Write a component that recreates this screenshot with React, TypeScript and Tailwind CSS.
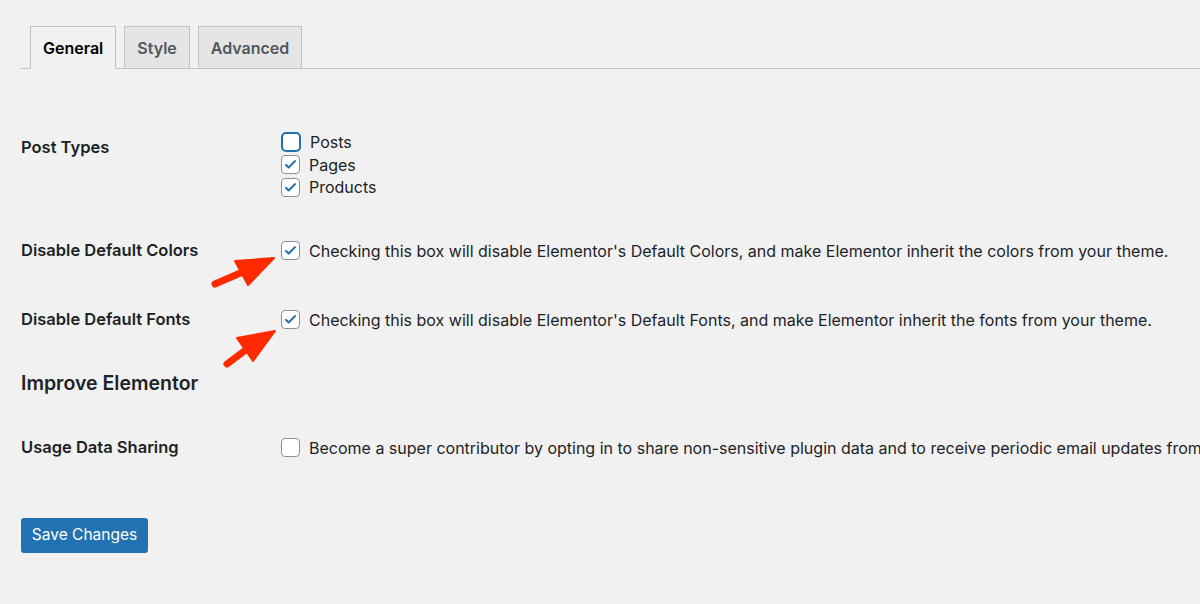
import React from 'react';

type BoxProps = { checked?: boolean; focused?: boolean };

function Box({ checked, focused }: BoxProps) {
  return (
    <span
      className={
        focused
          ? 'flex h-[20px] w-[20px] shrink-0 items-center justify-center rounded-[5px] border-2 border-[#2271b1] bg-white'
          : 'flex h-[19px] w-[19px] shrink-0 items-center justify-center rounded-[4px] border border-[#8c8f94] bg-white'
      }
    >
      {checked && (
        <svg viewBox="0 0 20 20" className="h-[15px] w-[15px]">
          <path d="M4 10.5l3.5 3.5L16 5.5" fill="none" stroke="#2271b1" strokeWidth="2.8" strokeLinecap="round" strokeLinejoin="round" />
        </svg>
      )}
    </span>
  );
}

const tabs = ['General', 'Style', 'Advanced'];

export default function App() {
  return (
    <div
      className="relative h-[604px] w-[1200px] overflow-hidden bg-[#f1f1f1] text-[#1d2327]"
      style={{ fontFamily: 'Inter, "Noto Sans", sans-serif' }}
    >
      <div className="pl-[21px]">
        {/* tabs */}
        <div className="mt-[27px] flex h-[42px] items-end border-b border-[#c3c4c7] pl-[9px]">
          {tabs.map((t, i) => (
            <div
              key={t}
              className={
                i === 0
                  ? '-mb-px mr-[8px] flex h-[43px] items-center border border-b-0 border-[#c3c4c7] bg-[#f1f1f1] px-[12px] text-[16px] font-semibold text-black'
                  : 'mr-[8px] flex h-[42px] items-center border border-b-0 border-[#c3c4c7] bg-[#e5e5e5] px-[12px] text-[16px] font-semibold text-[#50575e]'
              }
            >
              {t}
            </div>
          ))}
        </div>

        {/* Post Types */}
        <div className="mt-[62px] flex">
          <div className="w-[260px] shrink-0 pt-[4px] text-[16.5px] font-semibold leading-[24px]">Post Types</div>
          <div className="flex flex-col text-[16px]">
            {[
              { label: 'Posts', checked: false, focused: true },
              { label: 'Pages', checked: true },
              { label: 'Products', checked: true },
            ].map((o) => (
              <label key={o.label} className="flex h-[22.5px] items-center gap-[9px]">
                <Box checked={o.checked} focused={o.focused} />
                <span>{o.label}</span>
              </label>
            ))}
          </div>
        </div>

        {/* Disable Default Colors */}
        <div className="mt-[40px] flex h-[24px] items-center text-[16px]">
          <div className="w-[260px] shrink-0 text-[16.5px] font-semibold">Disable Default Colors</div>
          <label className="flex items-center gap-[9px] whitespace-nowrap">
            <Box checked />
            <span>Checking this box will disable Elementor's Default Colors, and make Elementor inherit the colors from your theme.</span>
          </label>
        </div>

        {/* Disable Default Fonts */}
        <div className="mt-[45px] flex h-[24px] items-center text-[16px]">
          <div className="w-[260px] shrink-0 text-[16.5px] font-semibold">Disable Default Fonts</div>
          <label className="flex items-center gap-[9px] whitespace-nowrap">
            <Box checked />
            <span>Checking this box will disable Elementor's Default Fonts, and make Elementor inherit the fonts from your theme.</span>
          </label>
        </div>

        <h2 className="mt-[38px] text-[19.5px] font-semibold leading-[26px]">Improve Elementor</h2>

        {/* Usage Data Sharing */}
        <div className="mt-[40px] flex h-[24px] items-center text-[16px]">
          <div className="w-[260px] shrink-0 text-[16.5px] font-semibold">Usage Data Sharing</div>
          <label className="flex items-center gap-[9px] whitespace-nowrap">
            <Box />
            <span>Become a super contributor by opting in to share non-sensitive plugin data and to receive periodic email updates from us.</span>
          </label>
        </div>

        <button className="mt-[58px] h-[35px] w-[127px] rounded-[3px] bg-[#2271b1] text-[15.5px] text-white">
          Save Changes
        </button>
      </div>

      {/* annotation arrows */}
      <svg className="pointer-events-none absolute left-0 top-0" width="1200" height="604">
        <g fill="#ff2a00" stroke="#ff2a00" strokeLinecap="round" strokeLinejoin="round">
          <line x1="215" y1="284" x2="245" y2="271" strokeWidth="7" />
          <polygon points="274,258 235,261 248,285" strokeWidth="2" />
          <line x1="227" y1="364" x2="247" y2="349" strokeWidth="7" />
          <polygon points="275,331 237,338 253,361" strokeWidth="2" />
        </g>
      </svg>
    </div>
  );
}
